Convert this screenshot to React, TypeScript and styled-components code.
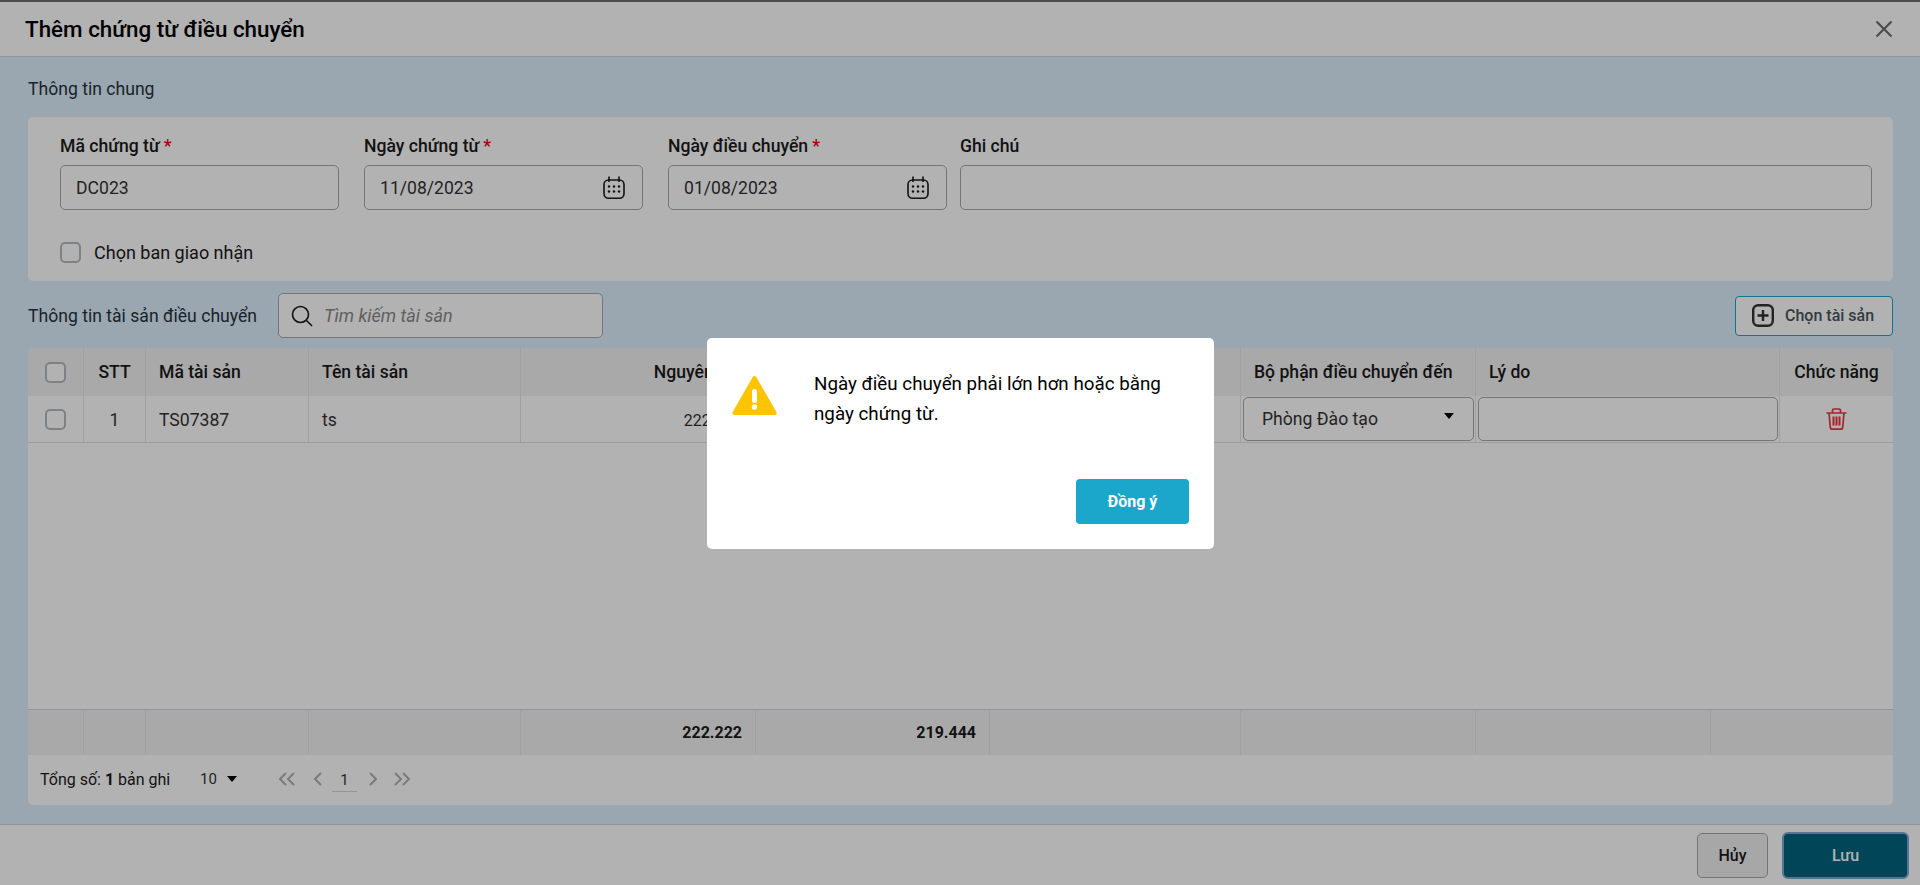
import React from 'react'
import styled, { createGlobalStyle } from 'styled-components'

const GlobalStyle = createGlobalStyle`
    html,
    body {
        margin: 0;
        padding: 0;
        height: 100%;
        overflow: hidden;
    }

    body {
        font-family: Roboto, "Noto Sans", sans-serif;
        color: #1a1a1a;
    }

    * {
        box-sizing: border-box;
    }
`

const Page = styled.div`
    display: flex;
    flex-direction: column;
    height: 885px;
    border-top: 2px solid #6e6e6e;
    background: #ddf0fe;
`

const Header = styled.header`
    display: flex;
    align-items: center;
    justify-content: space-between;
    height: 55px;
    padding: 0 27px 0 25px;
    background: #fff;
    border-bottom: 1px solid #d0d5da;
`

const Title = styled.h1`
    margin: 0;
    font-size: 22.4px;
    font-weight: 500;
    color: #000;
`

const Body = styled.main`
    display: flex;
    flex: 1;
    flex-direction: column;
    min-height: 0;
    padding: 20px 27px 19px 28px;
`

const SectionTitle = styled.div`
    font-size: 17.6px;
    line-height: 24px;
    color: #26323c;
`

const Card = styled.section`
    margin-top: 16px;
    height: 164px;
    padding: 17px 21px 0 32px;
    border-radius: 5px;
    background: #fff;
`

const FieldRow = styled.div`
    display: grid;
    grid-template-columns: 279px 279px 279px 1fr;
    column-gap: 25px;

    & > :last-child {
        margin-left: -12px;
    }
`

const Field = styled.div`
    display: flex;
    flex-direction: column;
    gap: 7px;
`

const Label = styled.label`
    font-size: 17.6px;
    font-weight: 500;
    line-height: 24px;
    color: #1a1a1a;
`

const Required = styled.span`
    margin-left: 4px;
    color: #e3000f;
`

const InputBox = styled.div`
    display: flex;
    align-items: center;
    justify-content: space-between;
    height: 45px;
    padding: 0 17px 0 15px;
    font-size: 17.6px;
    color: #333;
    border: 1px solid #a8a8a8;
    border-radius: 5px;
`

const CheckLine = styled.div`
    display: flex;
    align-items: center;
    gap: 13px;
    margin-top: 32px;
    font-size: 18px;
    color: #1a1a1a;
`

const Check = styled.span`
    display: block;
    flex: none;
    width: 21px;
    height: 21px;
    border: 2px solid #b4bac0;
    border-radius: 5px;
    background: #fff;
`

const Toolbar = styled.div`
    display: flex;
    align-items: center;
    height: 67px;
    padding-top: 2px;
`

const ToolbarTitle = styled(SectionTitle)`
    width: 250px;
`

const SearchBox = styled.div`
    display: flex;
    align-items: center;
    gap: 11px;
    width: 325px;
    height: 45px;
    padding: 0 12px;
    border: 1px solid #a8a8a8;
    border-radius: 5px;
    background: #fff;
    font-size: 18px;
    font-style: italic;
    color: #8a8a8a;
`

const ChooseButton = styled.button`
    display: flex;
    align-items: center;
    gap: 11px;
    width: 158px;
    height: 40px;
    margin-left: auto;
    padding: 0 0 0 16px;
    border: 1px solid #1ba7cb;
    border-radius: 4px;
    background: #fff;
    font-family: inherit;
    font-size: 16px;
    font-weight: 500;
    color: #4a5560;
`

const TableCard = styled.section`
    display: flex;
    flex: 1;
    flex-direction: column;
    min-height: 0;
    border-radius: 5px;
    background: #fff;
    overflow: hidden;
`

const HEAD_COLUMNS = '56px 62px 163px 212px 235px 234px 251px 235px 304px 113px'
const SUM_COLUMNS = '56px 62px 163px 212px 235px 234px 251px 235px 235px 182px'

const Row = styled.div<{ $columns: string; $height: number; $bg: string; $bottom?: boolean; $top?: boolean }>`
    display: grid;
    flex: none;
    grid-template-columns: ${({ $columns }) => $columns};
    height: ${({ $height }) => $height}px;
    background: ${({ $bg }) => $bg};
    border-top: ${({ $top }) => ($top ? '1px solid #d0d5da' : 'none')};
    border-bottom: ${({ $bottom }) => ($bottom ? '1px solid #dfe3e6' : 'none')};
`

const Cell = styled.div<{ $align?: string; $strong?: boolean }>`
    display: flex;
    align-items: center;
    justify-content: ${({ $align }) => $align || 'flex-start'};
    min-width: 0;
    padding: 0 13px;
    font-size: 17.6px;
    font-weight: ${({ $strong }) => ($strong ? 500 : 400)};
    color: ${({ $strong }) => ($strong ? '#1a1a1a' : '#333')};
    border-right: 1px solid #e6e6e6;
    white-space: nowrap;

    &:last-child {
        border-right: none;
    }
`

const TextCell = styled(Cell)`
    padding-top: 2px;
`

const AmountCell = styled(TextCell)`
    justify-content: flex-end;
    font-size: 16px;
`

const TotalCell = styled(Cell)`
    justify-content: flex-end;
    font-size: 16px;
    font-weight: 700;
    color: #1a1a1a;
`

const ControlCell = styled(Cell)`
    padding: 0 1px 0 2px;
`

const SelectBox = styled(InputBox)`
    flex: 1;
    height: 44px;
    padding: 0 19px 0 18px;
`

const ReasonBox = styled(InputBox)`
    flex: 1;
    height: 44px;
`

const Caret = styled.span<{ $lift: number }>`
    display: block;
    width: 0;
    height: 0;
    margin-bottom: ${({ $lift }) => $lift}px;
    border-left: 5px solid transparent;
    border-right: 5px solid transparent;
    border-top: 6px solid #000;
`

const Spacer = styled.div`
    flex: 1;
`

const Pagination = styled.div`
    display: flex;
    flex: none;
    align-items: center;
    height: 50px;
    padding: 0 0 2px 12px;
    font-size: 16px;
    color: #1a1a1a;
`

const Total = styled.span`
    width: 160px;

    b {
        font-weight: 700;
    }
`

const PageSize = styled.span`
    display: flex;
    align-items: center;
    gap: 10px;
    width: 78px;
    font-size: 15px;
    color: #333;
`

const PagerIcon = styled.svg<{ $gap: number }>`
    flex: none;
    margin-right: ${({ $gap }) => $gap}px;
    fill: none;
    stroke: #b0b0b0;
    stroke-width: 2;
`

const PageNumber = styled.span`
    display: block;
    width: 25px;
    margin-right: 12px;
    padding: 4px 0 2px;
    border-bottom: 1px solid #d6d6d6;
    text-align: center;
    font-size: 15px;
    color: #333;
`

const Footer = styled.footer`
    display: flex;
    flex: none;
    align-items: center;
    justify-content: flex-end;
    gap: 14px;
    height: 61px;
    padding: 0 11px 0 0;
    background: #fff;
    border-top: 1px solid #d0d5da;
`

const CancelButton = styled.button`
    width: 71px;
    height: 45px;
    border: 1px solid #a8a8a8;
    border-radius: 5px;
    background: #f0f0f0;
    font-family: inherit;
    font-size: 16px;
    font-weight: 500;
    color: #1a1a1a;
`

const SaveButton = styled.button`
    width: 127px;
    height: 47px;
    border: 2px solid #7fa8d6;
    border-radius: 6px;
    background: #00637e;
    font-family: inherit;
    font-size: 16px;
    font-weight: 500;
    color: #fff;
`

const Overlay = styled.div`
    position: fixed;
    inset: 0;
    background: rgba(0, 0, 0, 0.3);
`

const Dialog = styled.div`
    position: fixed;
    top: 338px;
    left: 707px;
    display: flex;
    flex-direction: column;
    width: 507px;
    height: 211px;
    padding: 30px 25px 25px;
    border-radius: 5px;
    background: #fff;
`

const DialogBody = styled.div`
    display: flex;
    flex: 1;
    gap: 37px;
`

const DialogText = styled.p`
    margin: 0;
    padding-top: 1px;
    font-size: 18.8px;
    line-height: 30px;
    color: #000;
`

const DialogActions = styled.div`
    display: flex;
    justify-content: flex-end;
`

const OkButton = styled.button`
    width: 113px;
    height: 45px;
    border: none;
    border-radius: 4px;
    background: #1ba7cb;
    font-family: inherit;
    font-size: 16px;
    font-weight: 700;
    color: #fff;
`

function CalendarIcon() {
    return (
        <svg width="22" height="23" viewBox="0 0 22 23" fill="none" stroke="#1a1a1a" strokeWidth="1.6">
            <rect x="1" y="4" width="20" height="18.200" rx="4.500" />
            <path d="M6 0.500V6M16 0.500V6" />
            <g fill="#1a1a1a" stroke="none">
                {[6, 11, 16].map(x =>
                    [10.500, 15.500].map(y => <circle key={`${x}-${y}`} cx={x} cy={y} r="1.200" />)
                )}
            </g>
        </svg>
    )
}

function SearchIcon() {
    return (
        <svg width="22" height="22" viewBox="0 0 22 22" fill="none" stroke="#1a1a1a" strokeWidth="1.6" style={{ flex: 'none' }}>
            <circle cx="9.500" cy="9.500" r="8" />
            <path d="M15.200 15.200L21 21" />
        </svg>
    )
}

function PlusBoxIcon() {
    return (
        <svg width="22" height="23" viewBox="0 0 22 23" fill="none" stroke="#333" strokeWidth="2.400" style={{ flex: 'none' }}>
            <rect x="1.200" y="1.200" width="19.600" height="20.600" rx="5" />
            <path d="M11 6v11M5.500 11.500h11" />
        </svg>
    )
}

function CloseIcon() {
    return (
        <svg width="18" height="18" viewBox="0 0 18 18" fill="none" stroke="#6e6e6e" strokeWidth="2.200">
            <path d="M1.500 1.500l15 15M16.500 1.500l-15 15" />
        </svg>
    )
}

function TrashIcon() {
    return (
        <svg width="21" height="22" viewBox="0 0 21 22" fill="none" stroke="#f0343a" strokeWidth="1.700">
            <path d="M0.500 5h20M6.500 5V2.500a1.500 1.500 0 0 1 1.500-1.500h5a1.500 1.500 0 0 1 1.500 1.500V5" />
            <path d="M3 5l1.300 14.500a2 2 0 0 0 2 1.700h8.400a2 2 0 0 0 2-1.700L18 5" />
            <path d="M7.500 8.500v9M10.500 8.500v9M13.500 8.500v9" strokeWidth="2" />
        </svg>
    )
}

function WarningIcon() {
    return (
        <svg width="45" height="39" viewBox="0 0 45 39" style={{ flex: 'none', marginTop: 8 }}>
            <path d="M20.600 1.200a2.200 2.200 0 0 1 3.800 0l20 34.800a2 2 0 0 1-1.700 3H2.300a2 2 0 0 1-1.700-3z" fill="#ffc400" />
            <rect x="20" y="13" width="5" height="14" rx="2.500" fill="#fff" />
            <circle cx="22.500" cy="31" r="2.700" fill="#fff" />
        </svg>
    )
}

function Pager({ d, width, gap }: { d: string; width: number; gap: number }) {
    return (
        <PagerIcon $gap={gap} width={width} height="16" viewBox={`0 0 ${width} 16`}>
            <path d={d} />
        </PagerIcon>
    )
}

export default function App() {
    return (
        <>
            <GlobalStyle />
            <Page>
                <Header>
                    <Title>Thêm chứng từ điều chuyển</Title>
                    <CloseIcon />
                </Header>
                <Body>
                    <SectionTitle>Thông tin chung</SectionTitle>
                    <Card>
                        <FieldRow>
                            <Field>
                                <Label>Mã chứng từ<Required>*</Required></Label>
                                <InputBox>DC023</InputBox>
                            </Field>
                            <Field>
                                <Label>Ngày chứng từ<Required>*</Required></Label>
                                <InputBox>11/08/2023<CalendarIcon /></InputBox>
                            </Field>
                            <Field>
                                <Label>Ngày điều chuyển<Required>*</Required></Label>
                                <InputBox>01/08/2023<CalendarIcon /></InputBox>
                            </Field>
                            <Field>
                                <Label>Ghi chú</Label>
                                <InputBox />
                            </Field>
                        </FieldRow>
                        <CheckLine><Check />Chọn ban giao nhận</CheckLine>
                    </Card>
                    <Toolbar>
                        <ToolbarTitle>Thông tin tài sản điều chuyển</ToolbarTitle>
                        <SearchBox><SearchIcon />Tìm kiếm tài sản</SearchBox>
                        <ChooseButton><PlusBoxIcon />Chọn tài sản</ChooseButton>
                    </Toolbar>
                    <TableCard>
                        <Row $columns={HEAD_COLUMNS} $height={48} $bg="#f3f3f3">
                            <Cell $align="center"><Check /></Cell>
                            <Cell $align="center" $strong>STT</Cell>
                            <Cell $strong>Mã tài sản</Cell>
                            <Cell $strong>Tên tài sản</Cell>
                            <Cell $align="flex-end" $strong>Nguyên giá</Cell>
                            <Cell />
                            <Cell />
                            <Cell $strong>Bộ phận điều chuyển đến</Cell>
                            <Cell $strong>Lý do</Cell>
                            <Cell $align="center" $strong>Chức năng</Cell>
                        </Row>
                        <Row $columns={HEAD_COLUMNS} $height={47} $bg="#fff" $bottom>
                            <Cell $align="center"><Check /></Cell>
                            <TextCell $align="center">1</TextCell>
                            <TextCell>TS07387</TextCell>
                            <TextCell>ts</TextCell>
                            <AmountCell>222.222</AmountCell>
                            <Cell />
                            <Cell />
                            <ControlCell>
                                <SelectBox>Phòng Đào tạo<Caret $lift={6} /></SelectBox>
                            </ControlCell>
                            <ControlCell><ReasonBox /></ControlCell>
                            <Cell $align="center"><TrashIcon /></Cell>
                        </Row>
                        <Spacer />
                        <Row $columns={SUM_COLUMNS} $height={46} $bg="#f3f3f3" $top>
                            <Cell />
                            <Cell />
                            <Cell />
                            <Cell />
                            <TotalCell>222.222</TotalCell>
                            <TotalCell>219.444</TotalCell>
                            <Cell />
                            <Cell />
                            <Cell />
                            <Cell />
                        </Row>
                        <Pagination>
                            <Total>Tổng số: <b>1</b> bản ghi</Total>
                            <PageSize>10<Caret $lift={0} /></PageSize>
                            <Pager width={18} gap={18} d="M8 2L2 8l6 6M16 2l-6 6 6 6" />
                            <Pager width={8} gap={10} d="M7 2L1 8l6 6" />
                            <PageNumber>1</PageNumber>
                            <Pager width={8} gap={17} d="M1 2l6 6-6 6" />
                            <Pager width={17} gap={0} d="M1 2l6 6-6 6M9 2l6 6-6 6" />
                        </Pagination>
                    </TableCard>
                </Body>
                <Footer>
                    <CancelButton>Hủy</CancelButton>
                    <SaveButton>Lưu</SaveButton>
                </Footer>
            </Page>
            <Overlay />
            <Dialog>
                <DialogBody>
                    <WarningIcon />
                    <DialogText>Ngày điều chuyển phải lớn hơn hoặc bằng ngày chứng từ.</DialogText>
                </DialogBody>
                <DialogActions>
                    <OkButton>Đồng ý</OkButton>
                </DialogActions>
            </Dialog>
        </>
    )
}
